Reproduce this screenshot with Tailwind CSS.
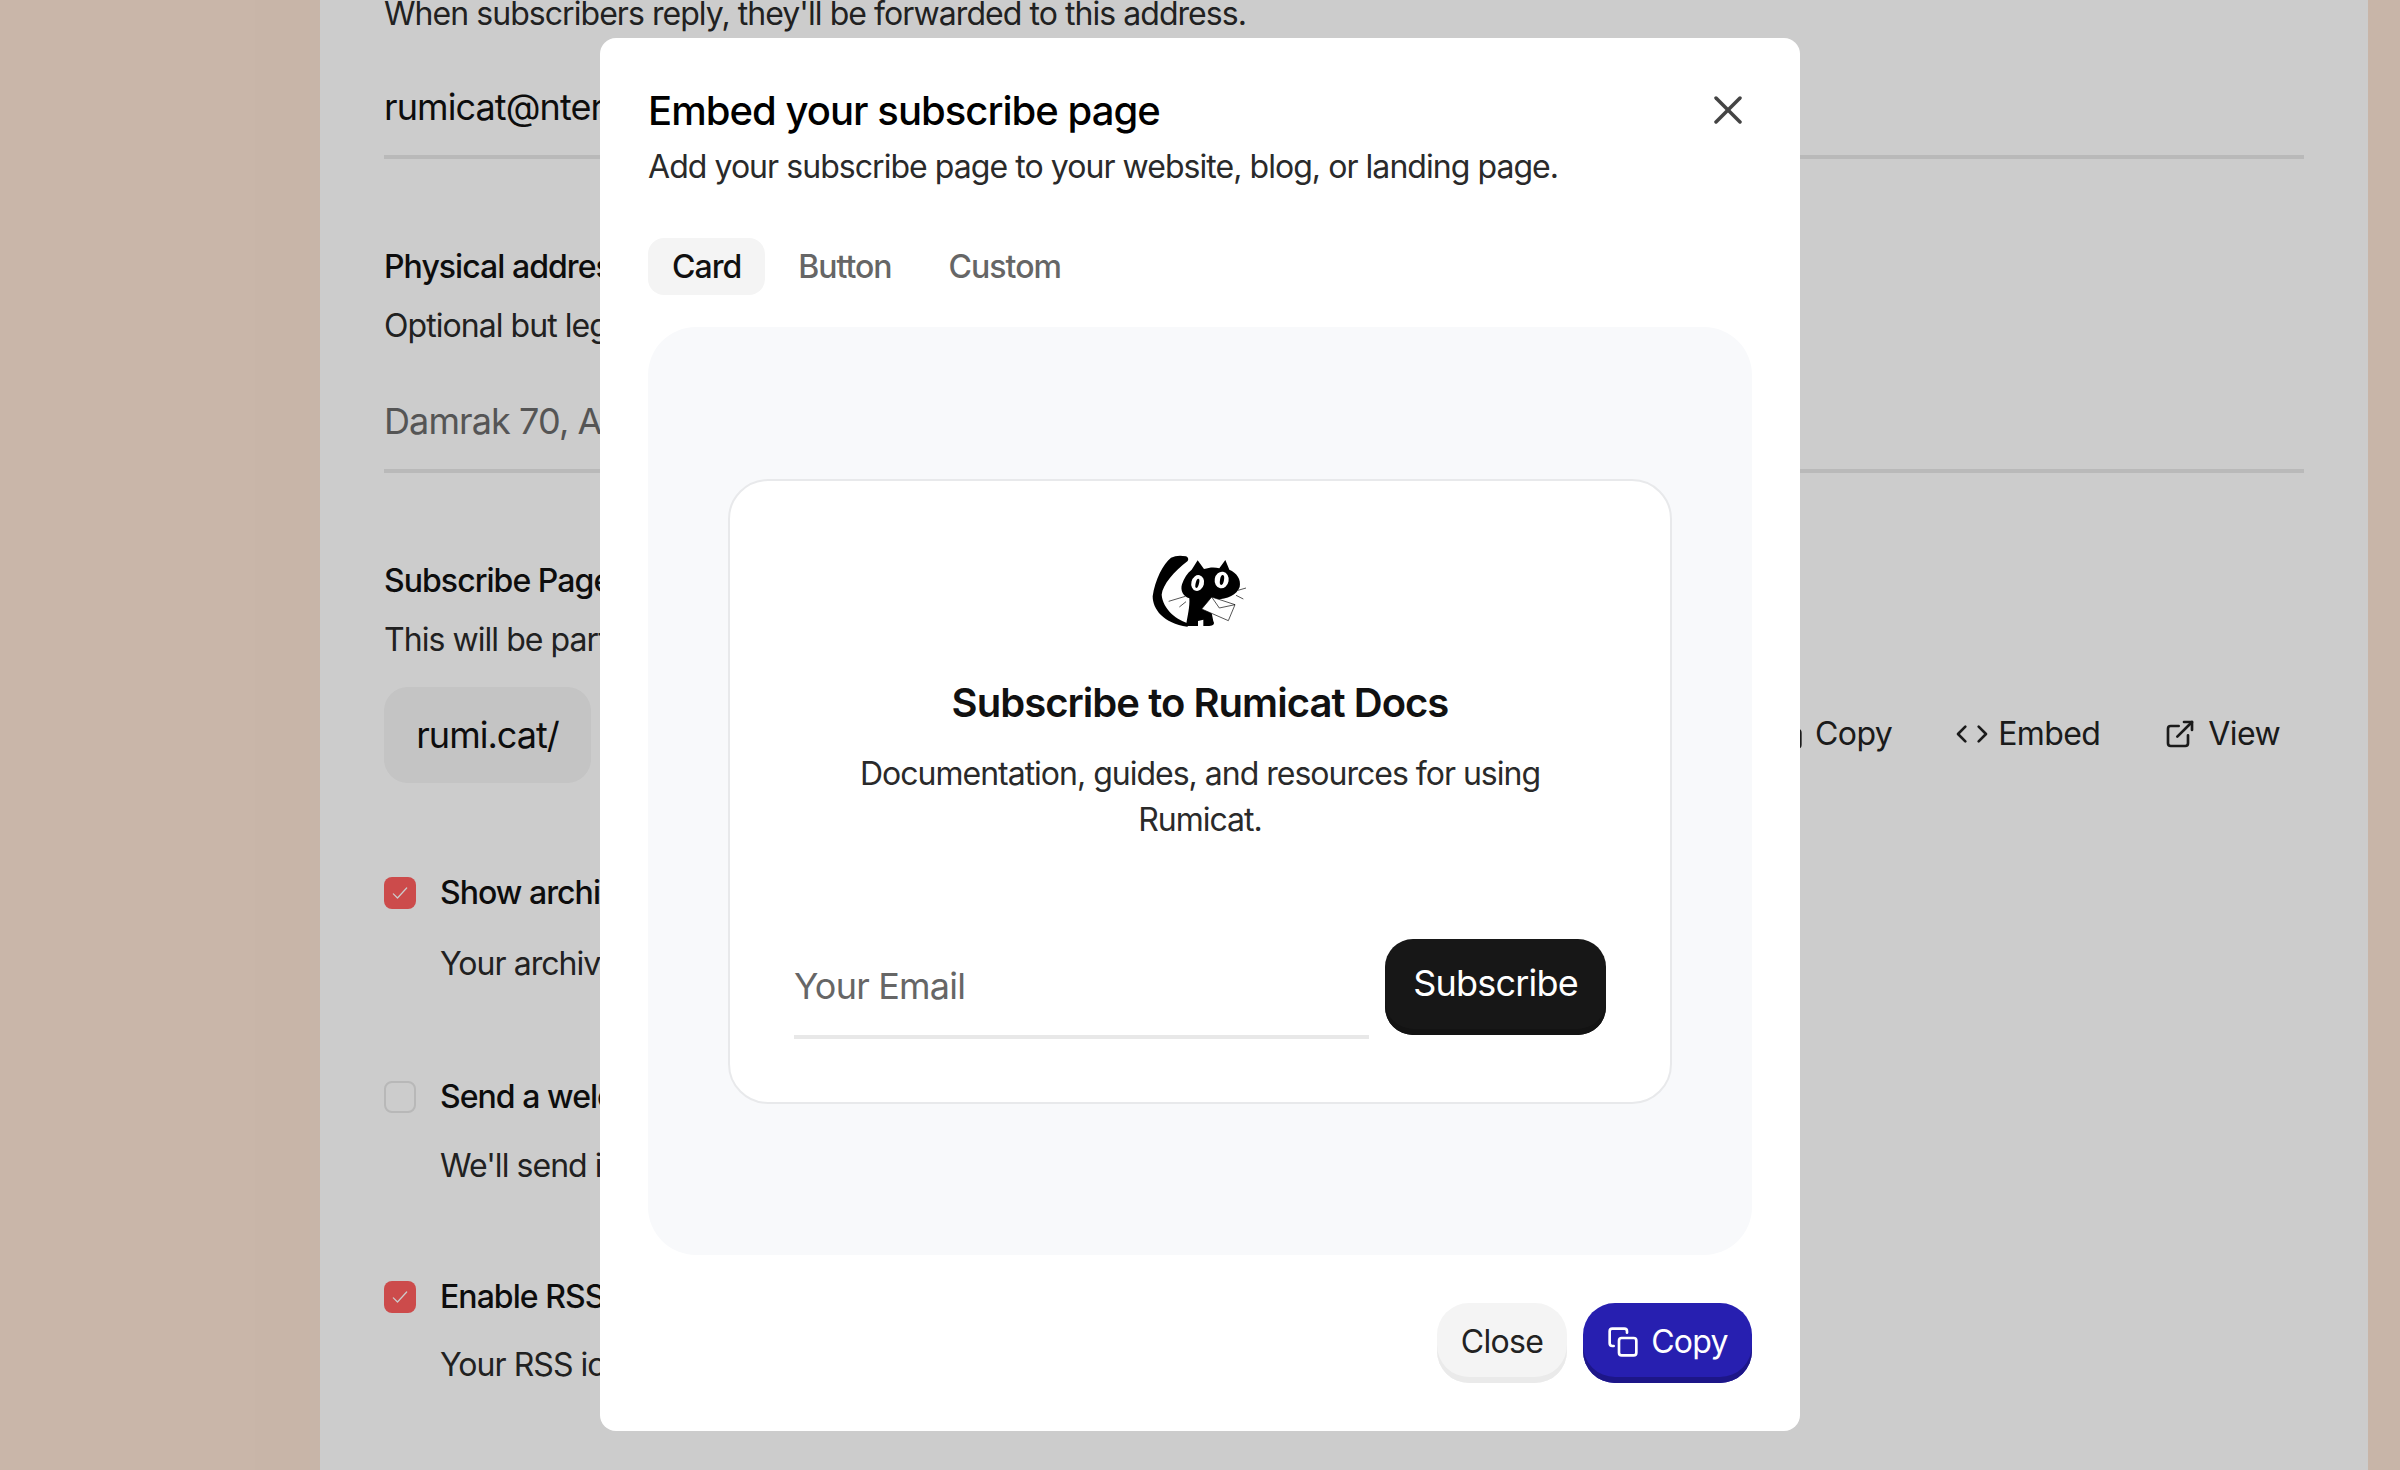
<!DOCTYPE html>
<html lang="en">
<head>
<meta charset="utf-8">
<title>Embed your subscribe page</title>
<script src="https://cdn.jsdelivr.net/npm/@tailwindcss/browser@4"></script>
</head>
<body class="font-['Inter',sans-serif]">
<div class="relative w-[2400px] h-[1470px] overflow-hidden bg-[#fbe3d3]">

  <!-- settings page behind the dialog -->
  <div class="ml-[320px] w-[2048px] h-[1480px] bg-white px-16 text-[32px] leading-[48px] tracking-[-0.95px] text-[#2a2a2a]">
    <div class="-mt-[10px]">When subscribers reply, they'll be forwarded to this address.</div>

    <div class="mt-[23px] h-[98px] pb-[2px] flex items-center border-b-4 border-[#e8e8e8] text-[36px] tracking-[-0.9px] text-[#111]">rumicat@nteract.io</div>

    <div class="mt-[84px] font-medium text-[#111]">Physical address</div>
    <div class="mt-[11px]">Optional but legally required in some regions.</div>
    <div class="mt-[25px] h-[98px] pb-[2px] flex items-center border-b-4 border-[#e8e8e8] text-[36px] tracking-[-0.9px] text-[#6b6b6b]">Damrak 70, Amsterdam</div>

    <div class="mt-[84px] font-medium text-[#111]">Subscribe Page</div>
    <div class="mt-[11px]">This will be part of your public page address.</div>
    <div class="mt-[23px] flex items-center justify-between">
      <div class="w-[207px] h-[96px] flex items-center justify-center rounded-3xl bg-[#f5f5f5] text-[36px] tracking-[-1px] text-[#111]">rumi.cat/</div>
      <div class="flex items-center gap-4 tracking-[-0.6px] text-[#222] -mt-[2px]">
        <div class="flex items-center gap-3 px-6">
          <svg class="w-8 h-8" viewBox="0 0 24 24" fill="none" stroke="currentColor" stroke-width="2"><rect x="9" y="9" width="13" height="13" rx="2"/><path d="M5 15H4a2 2 0 0 1-2-2V4a2 2 0 0 1 2-2h9a2 2 0 0 1 2 2v1"/></svg>
          <span>Copy</span>
        </div>
        <div class="flex items-center gap-2.5 px-6">
          <svg class="w-8 h-8" viewBox="0 0 24 24" fill="none" stroke="currentColor" stroke-width="2" stroke-linecap="round" stroke-linejoin="round"><path d="M7 6.500 1.500 12 7 17.500"/><path d="M17 6.500 22.500 12 17 17.500"/></svg>
          <span>Embed</span>
        </div>
        <div class="flex items-center gap-3 px-6">
          <svg class="w-8 h-8" viewBox="0 0 24 24" fill="none" stroke="currentColor" stroke-width="2" stroke-linecap="round" stroke-linejoin="round"><path d="M15 3h6v6"/><path d="M10 14 21 3"/><path d="M18 13v6a2 2 0 0 1-2 2H5a2 2 0 0 1-2-2V8a2 2 0 0 1 2-2h6"/></svg>
          <span>View</span>
        </div>
      </div>
    </div>

    <div class="mt-[86px] flex items-center gap-6 font-medium text-[#111]">
      <div class="w-8 h-8 rounded-lg bg-[#ff5e5e] flex items-center justify-center">
        <svg class="w-5 h-5" viewBox="0 0 24 24" fill="none" stroke="white" stroke-width="1.500" stroke-linecap="round" stroke-linejoin="round"><path d="M4 13l5 5L20 6"/></svg>
      </div>
      <span>Show archive</span>
    </div>
    <div class="mt-[23px] ml-[56px]">Your archive is public.</div>

    <div class="mt-[85px] flex items-center gap-6 font-medium text-[#111]">
      <div class="w-8 h-8 rounded-lg bg-white border-2 border-[#e6e6e6]"></div>
      <span>Send a welcome email</span>
    </div>
    <div class="mt-[21px] ml-[56px]">We'll send it to new subscribers.</div>

    <div class="mt-[83px] flex items-center gap-6 font-medium text-[#111]">
      <div class="w-8 h-8 rounded-lg bg-[#ff5e5e] flex items-center justify-center">
        <svg class="w-5 h-5" viewBox="0 0 24 24" fill="none" stroke="white" stroke-width="1.500" stroke-linecap="round" stroke-linejoin="round"><path d="M4 13l5 5L20 6"/></svg>
      </div>
      <span>Enable RSS</span>
    </div>
    <div class="mt-5 ml-[56px]">Your RSS icon is shown.</div>
  </div>

  <!-- overlay -->
  <div class="absolute inset-0 bg-black/20"></div>

  <!-- dialog -->
  <div class="absolute left-[600px] top-[38px] w-[1200px] h-[1393px] rounded-2xl bg-white px-12 pt-[45px]">
    <svg class="absolute right-[58px] top-[58px] w-7 h-7 text-[#444]" viewBox="0 0 28 28" fill="none" stroke="currentColor" stroke-width="3.500" stroke-linecap="round"><path d="M2 2l24 24"/><path d="M26 2 2 26"/></svg>

    <h2 class="text-[40px] leading-[56px] font-medium tracking-[-0.96px] text-black">Embed your subscribe page</h2>
    <p class="mt-1 text-[32px] leading-[48px] tracking-[-0.95px] text-[#2a2a2a]">Add your subscribe page to your website, blog, or landing page.</p>

    <div class="mt-[47px] flex gap-[9px] text-[32px] leading-[57px] font-medium tracking-[-1px] text-[#666]">
      <div class="px-6 h-[57px] rounded-2xl bg-[#f4f4f4] text-[#111]">Card</div>
      <div class="px-6 h-[57px]">Button</div>
      <div class="px-6 h-[57px]">Custom</div>
    </div>

    <div class="mt-8 h-[928px] rounded-[48px] bg-[#f8f9fb] flex items-center justify-center">
      <div class="w-[944px] h-[625px] rounded-[40px] border-2 border-[#e8e9eb] bg-white px-16 pt-[72px] flex flex-col items-center">
        <!-- cat logo -->
        <svg class="w-[100px] h-[76px]" viewBox="150 100 300 228">
          <path d="M258 110C240 106 226 108 213 114C190 132 165 180 158 230C158 268 190 312 262 321L270 312C232 304 188 268 185 225C188 195 222 155 263 124C267 118 264 113 258 110Z" fill="#000"/>
          <path d="M275 150L293 122L312 148C330 142 345 142 358 146L376 121L388 150C410 160 424 178 419 202C410 226 385 238 345 240L335 280L340 305C345 312 340 320 325 319H310V300L294 304V319H258C262 290 270 262 268 236C250 232 240 212 246 194C252 176 262 160 275 150Z" fill="#000"/>
          <ellipse cx="293" cy="190" rx="19" ry="24" transform="rotate(14 293 190)" fill="#fff"/>
          <ellipse cx="365" cy="181" rx="21" ry="25" transform="rotate(10 365 181)" fill="#fff"/>
          <ellipse cx="292" cy="191" rx="5" ry="14" transform="rotate(14 292 191)" fill="#000"/>
          <ellipse cx="366" cy="181" rx="6" ry="15" transform="rotate(10 366 181)" fill="#000"/>
          <path d="M335 232 405 255 385 303 305 268Z" fill="#fff" stroke="#000" stroke-width="2"/>
          <path d="M335 232 358 265 405 255" fill="none" stroke="#000" stroke-width="2"/>
          <path d="M206 245 256 230M238 262 258 246M414 212 438 205M408 227 430 238" fill="none" stroke="#000" stroke-width="2"/>
        </svg>
        <h3 class="mt-[46px] text-[40px] leading-[56px] font-semibold tracking-[-0.96px] text-[#111]">Subscribe to Rumicat Docs</h3>
        <p class="mt-5 w-[720px] text-center text-[32px] leading-[46px] tracking-[-1px] text-[#2a2a2a]">Documentation, guides, and resources for using Rumicat.</p>
        <div class="mt-[96px] w-full flex items-start gap-4">
          <div class="w-[575px] h-[100px] pb-[1px] flex items-center border-b-4 border-[#e8e8e8] text-[36px] tracking-[-0.8px] text-[#666]">Your Email</div>
          <div class="w-[221px] h-[96px] pb-2 flex items-center justify-center rounded-[28px] bg-[#171717] shadow-[inset_0_-6px_0_#131313] text-[36px] tracking-[-0.8px] text-white">Subscribe</div>
        </div>
      </div>
    </div>

    <div class="mt-12 flex justify-end gap-4 text-[32px] tracking-[-0.7px]">
      <div class="w-[130px] h-[80px] pb-[3px] flex items-center justify-center rounded-[32px] bg-[#f4f4f4] shadow-[inset_0_-6px_0_#eaeaea] text-[#222]">Close</div>
      <div class="w-[169px] h-[80px] pb-[3px] flex items-center justify-center gap-3 rounded-[32px] bg-[#271fb0] shadow-[inset_0_-6px_0_#1d1688] text-white">
        <svg class="w-8 h-8" viewBox="0 0 24 24" fill="none" stroke="currentColor" stroke-width="2" stroke-linecap="round" stroke-linejoin="round"><rect x="9" y="9" width="13" height="13" rx="2"/><path d="M5 15H4a2 2 0 0 1-2-2V4a2 2 0 0 1 2-2h9a2 2 0 0 1 2 2v1"/></svg>
        <span>Copy</span>
      </div>
    </div>
  </div>
</div>
</body>
</html>
